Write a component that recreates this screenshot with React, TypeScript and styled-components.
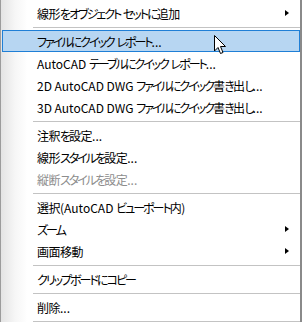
import styled, { createGlobalStyle } from 'styled-components';

const Global = createGlobalStyle`
  html, body {
    margin: 0;
    padding: 0;
    background: #fff;
  }
`;

const Menu = styled.div`
  position: relative;
  width: 302px;
  height: 322px;
  box-sizing: border-box;
  overflow: hidden;
  padding-top: 2px;
  border-left: 1px solid #9c9c9c;
  border-right: 2px solid #8a8a8a;
  background: linear-gradient(to right, #e4e4e4 0, #f6f6f6 14px, #fdfdfd 24px, #fff 26px);
  font-family: 'Noto Sans CJK JP', 'Noto Sans', sans-serif;
  font-size: 12px;
  font-feature-settings: 'palt';
  color: #000;
`;

const Item = styled.div<{ $active?: boolean; $disabled?: boolean }>`
  display: flex;
  align-items: center;
  height: 22px;
  box-sizing: border-box;
  margin-left: 1px;
  padding: 0 10px 0 34px;
  border: 1px solid ${(p) => (p.$active ? '#1f7fd6' : 'transparent')};
  background: ${(p) => (p.$active ? '#b7d6f2' : 'transparent')};
  color: ${(p) => (p.$disabled ? '#8d8d8d' : '#000')};
  white-space: pre;
`;

// kana in the menu font run narrower than the fallback's
const Kana = styled.span`
  letter-spacing: -2px;
`;

const Kanji = styled.span`
  letter-spacing: -0.5px;
`;

const Arrow = styled.span`
  margin-left: auto;
  width: 0;
  height: 0;
  border-top: 3.5px solid transparent;
  border-bottom: 3.5px solid transparent;
  border-left: 4px solid #000;
`;

const Separator = styled.div`
  height: 1px;
  margin: 3px 0 2px 32px;
  background: #c3c3c3;
`;

const Cursor = styled.svg`
  position: absolute;
  left: 213px;
  top: 35px;
`;

const Label = ({ text }: { text: string }) => {
  const parts = text.match(/[\u3040-\u30ff]+|[\u4e00-\u9fff]+|[^\u3040-\u30ff\u4e00-\u9fff]+/g) || [];
  return (
    <>
      {parts.map((s, i) =>
        /[\u3040-\u30ff]/.test(s) ? (
          <Kana key={i}>{s}</Kana>
        ) : /[\u4e00-\u9fff]/.test(s) ? (
          <Kanji key={i}>{s}</Kanji>
        ) : (
          <span key={i}>{s}</span>
        )
      )}
    </>
  );
};

type Entry = { label?: string; sub?: boolean; active?: boolean; disabled?: boolean; sep?: boolean };

const entries: Entry[] = [
  { label: '線形をオブジェクト セットに追加', sub: true },
  { sep: true },
  { label: 'ファイルにクイック レポート...', active: true },
  { label: 'AutoCAD テーブルにクイック レポート...' },
  { label: '2D AutoCAD DWG ファイルにクイック書き出し...' },
  { label: '3D AutoCAD DWG ファイルにクイック書き出し...' },
  { sep: true },
  { label: '注釈を設定...' },
  { label: '線形スタイルを設定...' },
  { label: '縦断スタイルを設定...', disabled: true },
  { sep: true },
  { label: '選択(AutoCAD ビューポート内)' },
  { label: 'ズーム', sub: true },
  { label: '画面移動', sub: true },
  { sep: true },
  { label: 'クリップボードにコピー' },
  { sep: true },
  { label: '削除...' },
  { sep: true },
];

const App = () => {
  return (
    <>
      <Global />
      <Menu>
        {entries.map((e, i) =>
          e.sep ? (
            <Separator key={i} />
          ) : (
            <Item key={i} $active={e.active} $disabled={e.disabled}>
              <Label text={e.label!} />
              {e.sub && <Arrow />}
            </Item>
          )
        )}
        <Cursor width="13" height="20" viewBox="0 0 13 20">
          <path
            d="M0.5 0.5 L0.5 16 L4 12.5 L6.5 18.5 L9 17.5 L6.5 11.5 L11.5 11.5 Z"
            fill="#fff"
            stroke="#000"
            strokeWidth="1"
            strokeLinejoin="miter"
          />
        </Cursor>
      </Menu>
    </>
  );
};

export default App;
